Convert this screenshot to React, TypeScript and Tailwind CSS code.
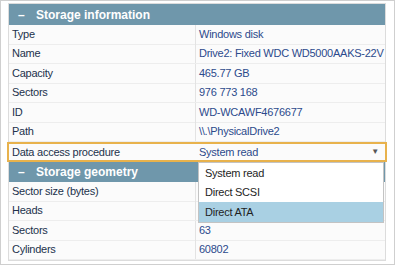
import React from "react";

const font = { fontFamily: '"Liberation Sans", Arial, sans-serif' };

const storageRows = [
  ["Type", "Windows disk"],
  ["Name", "Drive2: Fixed WDC WD5000AAKS-22V"],
  ["Capacity", "465.77 GB"],
  ["Sectors", "976 773 168"],
  ["ID", "WD-WCAWF4676677"],
  ["Path", "\\\\.\\PhysicalDrive2"],
];

const geometryRows = [
  ["Sector size (bytes)", ""],
  ["Heads", ""],
  ["Sectors", "63"],
  ["Cylinders", "60802"],
];

const options = ["System read", "Direct SCSI", "Direct ATA"];

function SectionHeader({ title, tall }: { title: string; tall?: boolean }) {
  return (
    <div
      className={`flex items-center bg-[#6f97ab] text-[12px] font-bold text-white ${
        tall ? "h-[21px]" : "h-[20px]"
      }`}
    >
      <span className="w-[27px] pl-[9px]">–</span>
      <span>{title}</span>
    </div>
  );
}

function Row({ label, value }: { label: string; value: string }) {
  return (
    <div className="flex h-[19.5px] items-center border-b border-[#ededed] text-[11px] tracking-[-0.25px]">
      <div className="w-[187px] shrink-0 overflow-hidden whitespace-nowrap border-r border-[#e3e3e3] pl-[3px] leading-[19px] text-[#22324c]">
        {label}
      </div>
      <div className="min-w-0 flex-1 overflow-hidden whitespace-nowrap pl-[3px] leading-[19px] text-[#2c4a8c]">
        {value}
      </div>
    </div>
  );
}

export default function App() {
  return (
    <div
      className="h-[265px] w-[395px] overflow-hidden border border-[#cfcfcf] bg-white"
      style={font}
    >
      <div className="relative ml-[7px] mt-[2px] w-[378px] border border-[#dcdcdc] bg-[#fbfbfb]">
        <SectionHeader title="Storage information" tall />
        {storageRows.map(([l, v]) => (
          <Row key={l} label={l} value={v} />
        ))}
        {/* Data access procedure row with open dropdown */}
        <div className="relative -mx-[2px] flex h-[20px] items-center border-2 border-[#e8b24c] text-[11px] tracking-[-0.25px]">
          <div className="w-[187px] shrink-0 pl-[3px] text-[#22324c]">
            Data access procedure
          </div>
          <div className="flex flex-1 items-center justify-between pl-[3px] pr-[6px] text-[#2c4a8c]">
            <span>System read</span>
            <span className="text-[8px] text-[#555]">▼</span>
          </div>
          <div className="absolute left-[189px] top-[18px] z-10 w-[186px] border border-[#c3c3c3] bg-white text-[11px] text-[#1e1e1e]">
            {options.map((o, i) => (
              <div
                key={o}
                className={`flex h-[19.5px] items-center pl-[6px] ${
                  i === 2 ? "bg-[#a9d0e3]" : ""
                }`}
              >
                {o}
              </div>
            ))}
          </div>
        </div>
        <SectionHeader title="Storage geometry" />
        {geometryRows.map(([l, v]) => (
          <Row key={l} label={l} value={v} />
        ))}
      </div>
    </div>
  );
}
